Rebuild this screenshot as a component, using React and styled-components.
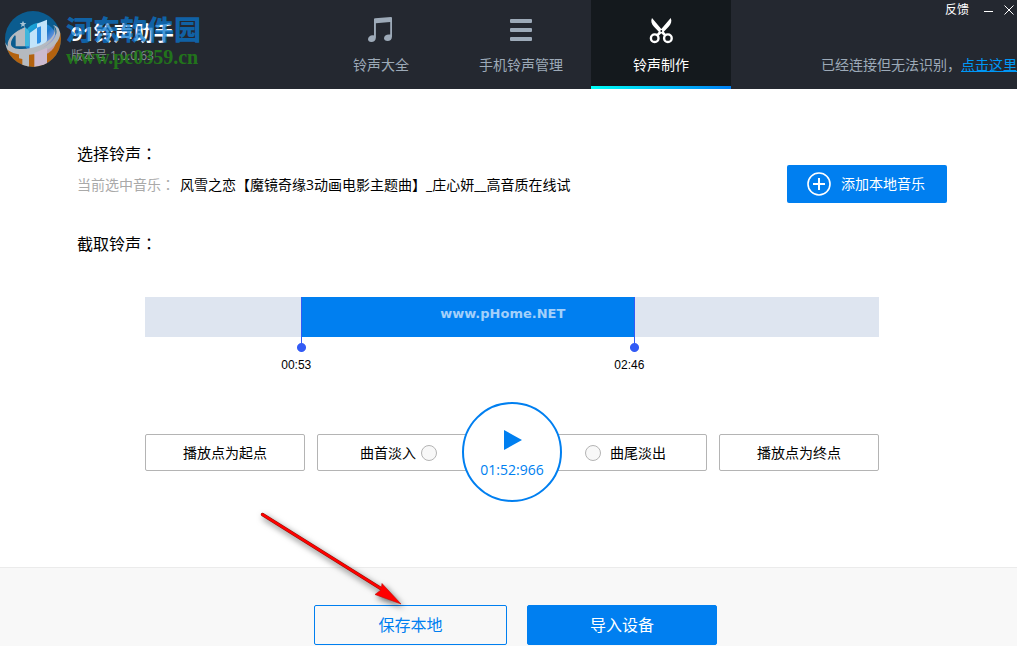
import React, { useState } from 'react';
import styled, { createGlobalStyle, css } from 'styled-components';

const BLUE = '#007ff0';
const DURATION = 249;

const GlobalStyle = createGlobalStyle`
  *, *::before, *::after { box-sizing: border-box; }
  body {
    margin: 0;
    background: #fff;
    color: #000;
    font-family: 'Open Sans', 'Noto Sans CJK SC', sans-serif;
    font-size: 14px;
    line-height: 20px;
  }
  button { font: inherit; cursor: pointer; }
  h1, h2, p { margin: 0; font-weight: 400; }
`;

const Page = styled.div`
  display: flex;
  flex-direction: column;
  min-height: 100vh;
  overflow: hidden;
`;

/* Full-width colon centred in its cell */
const Colon = styled.span`
  font-family: 'Noto Sans CJK TC', sans-serif;
  line-height: 1;
`;

/* Header */

const Header = styled.header`
  display: grid;
  grid-template-columns: minmax(205px, 311fr) auto minmax(200px, 286fr);
  height: 89px;
  background: #242830;
  color: #9daab8;
`;

const Brand = styled.div`
  position: relative;
  display: flex;
  align-items: flex-start;
  gap: 10px;
  padding: 11px 0 0 5px;
`;

const BrandText = styled.div`
  padding-top: 11px;
`;

const AppName = styled.h1`
  color: #fff;
  font-size: 20px;
  font-weight: 700;
  line-height: 24px;
`;

const Version = styled.p`
  color: #8b8f96;
  font-size: 12px;
  line-height: 20px;
`;

const SiteMark = styled.div`
  position: absolute;
  left: 66px;
  top: 14px;
  white-space: nowrap;
  font-weight: 900;
`;

const SiteName = styled.div`
  color: rgba(10, 118, 205, 0.75);
  font-size: 27px;
  line-height: 32px;
`;

const SiteUrl = styled.div`
  color: rgba(34, 136, 22, 0.8);
  font-family: 'Liberation Serif', serif;
  font-size: 20px;
  font-weight: 700;
  line-height: 22px;
`;

const Nav = styled.nav`
  display: flex;
`;

const Tab = styled.button`
  display: flex;
  flex-direction: column;
  align-items: center;
  gap: 11px;
  width: 140px;
  padding: 16px 0 0;
  border: 0;
  border-bottom: 3px solid transparent;
  background: none;
  color: inherit;
  ${({ $active }) =>
    $active &&
    css`
      background: linear-gradient(90deg, #00fff6, #0080f5) bottom / 100% 3px no-repeat border-box, #14191d;
      background-origin: border-box;
      color: #fff;
    `}
`;

const Status = styled.div`
  display: flex;
  flex-direction: column;
  align-items: flex-end;
  justify-content: space-between;
  padding-bottom: 14px;
  white-space: nowrap;
`;

const WindowBar = styled.div`
  display: flex;
  align-items: center;
  padding-right: 3px;
  color: #fff;
`;

const BarButton = styled.button`
  display: flex;
  padding: 0;
  margin-left: ${({ $gap }) => $gap || 0}px;
  border: 0;
  background: none;
  color: inherit;
  font-size: 12px;
  line-height: 20px;
`;

const StatusLink = styled.a`
  color: #0097f5;
`;

/* Content */

const Main = styled.main`
  flex: 1;
  padding: 53px 70px 96px 77px;
`;

const Source = styled.section`
  display: flex;
  align-items: flex-end;
  justify-content: space-between;
  margin-bottom: 29px;
`;

const Heading = styled.h2`
  font-size: 16px;
  line-height: 24px;
`;

const Current = styled.p`
  padding: 9px 0 8px;
`;

const Muted = styled.span`
  margin-right: 5px;
  color: #a9a9a9;
`;

const AddButton = styled.button`
  display: flex;
  align-items: center;
  gap: 10px;
  height: 38px;
  padding: 0 22px 0 20px;
  border: 0;
  border-radius: 2px;
  background: ${BLUE};
  color: #fff;
`;

const Editor = styled.div`
  max-width: 734px;
  margin: 41px auto 0;
`;

const Track = styled.div`
  position: relative;
  display: grid;
  height: 40px;
  background: #dee5f0;
`;

const Selection = styled.div`
  grid-column: 2;
  background: ${BLUE};
  color: #a3d0fa;
  font-family: 'DejaVu Sans', sans-serif;
  font-size: 13px;
  font-weight: 700;
  line-height: 34px;
  text-align: center;
  padding-left: 70px;
`;

const thumb = css`
  width: 9px;
  height: 55px;
  border: 0;
  border-radius: 0;
  background:
    radial-gradient(circle at 50% 50%, #335bf5 4px, transparent 5px) bottom / 9px 9px no-repeat,
    linear-gradient(#335bf5, #335bf5) top / 1px 50px no-repeat;
  pointer-events: auto;
  cursor: ew-resize;
`;

const Handle = styled.input`
  position: absolute;
  top: 0;
  left: -4px;
  width: calc(100% + 9px);
  height: 55px;
  margin: 0;
  appearance: none;
  background: none;
  pointer-events: none;
  &::-webkit-slider-runnable-track { height: 55px; background: none; }
  &::-webkit-slider-thumb { appearance: none; ${thumb} }
  &::-moz-range-thumb { ${thumb} }
`;

const Times = styled.div`
  display: grid;
  margin-bottom: 60px;
  padding-top: 19px;
`;

const Time = styled.output`
  grid-column: ${({ $column }) => $column};
  margin-left: -20px;
  font-family: 'Liberation Sans', sans-serif;
  font-size: 12px;
  line-height: 18px;
`;

const Controls = styled.div`
  position: relative;
  display: flex;
  gap: 12px;
`;

const PointButton = styled.button`
  width: 160px;
  height: 37px;
  padding: 0;
  border: 1px solid #b4b4b4;
  border-radius: 2px;
  background: #fff;
  color: #000;
`;

const FadeGroup = styled.div`
  flex: 1;
  display: flex;
  align-items: center;
  justify-content: space-between;
  height: 37px;
  padding: 0 40px 0 42px;
  border: 1px solid #b4b4b4;
  border-radius: 2px;
`;

const FadeLabel = styled.label`
  display: flex;
  align-items: center;
  gap: ${({ $gap }) => $gap}px;
`;

const FadeCheck = styled.input`
  width: 16px;
  height: 16px;
  margin: 0;
  appearance: none;
  border: 1px solid #b4b4b4;
  border-radius: 50%;
  background: #f8f8f8;
  &:checked { background: ${BLUE}; }
`;

const PlayButton = styled.button`
  position: absolute;
  left: calc(50% - 50px);
  top: -32px;
  display: flex;
  flex-direction: column;
  align-items: center;
  gap: 10px;
  width: 100px;
  height: 100px;
  padding: 26px 0 0;
  border: 2px solid ${BLUE};
  border-radius: 50%;
  background: #fff;
  color: ${BLUE};
`;

/* Footer */

const Footer = styled.footer`
  display: flex;
  justify-content: center;
  gap: 20px;
  padding: 37px 0 1px 14px;
  border-top: 1px solid #ebebeb;
  background: #f8f8f8;
`;

const SaveSlot = styled.div`
  position: relative;
`;

const ActionButton = styled.button`
  width: ${({ $primary }) => ($primary ? 190 : 193)}px;
  height: 40px;
  padding: 0;
  border: 1px solid ${BLUE};
  border-radius: 2px;
  background: ${({ $primary }) => ($primary ? BLUE : 'transparent')};
  color: ${({ $primary }) => ($primary ? '#fff' : BLUE)};
  font-size: 16px;
`;

const Pointer = styled.svg`
  position: absolute;
  left: -60px;
  top: -98px;
  pointer-events: none;
  overflow: visible;
  filter: drop-shadow(2px 3px 3px rgba(0, 0, 0, 0.6));
`;

function Logo() {
  return (
    <svg width="56" height="56" viewBox="0 0 168 168" aria-hidden="true">
      <defs>
        <clipPath id="disc"><circle cx="84" cy="84" r="84" /></clipPath>
        <linearGradient id="glow" x1="0" y1="0" x2="1" y2="1">
          <stop offset="0" stopColor="#20d4f0" />
          <stop offset="0.5" stopColor="#1e7fdc" />
          <stop offset="0.75" stopColor="#b9b4fa" />
          <stop offset="1" stopColor="#e09a6c" />
        </linearGradient>
      </defs>
      <g clipPath="url(#disc)">
        <path d="M0 0H168V168H0Z" fill="#0b5c8f" />
        <path d="M0 112C50 142 118 124 168 62V168H0Z" fill="#b3620f" />
        <circle cx="105" cy="84" r="49" fill="url(#glow)" opacity="0.8" />
        <path d="M28 68L60 48V106H32V76Z" fill="#b5bac0" />
        <path d="M60 48L72 60V106H60Z" fill="#3fb6dc" />
        <path d="M74 66L96 50V38L126 26V88Q122 110 96 114H74Z" fill="#c2e4fa" />
        <path d="M96 50L108 46V92Q106 98 96 98Z" fill="#2d8fe4" />
        <path d="M62 48C30 60 6 82 8 104C14 130 64 134 104 116C140 98 162 68 146 46C156 68 138 88 108 102C66 120 16 118 18 98C18 82 36 62 62 48Z" fill="#b5bac0" />
        <path d="M0 94C14 130 98 134 142 90C156 74 160 54 144 42C170 48 172 76 152 98C108 140 24 142 0 108Z" fill="#b5bac0" />
        <path d="M42 126H72V168H52V144L42 142Z" fill="#b5bac0" />
        <path d="M88 126L126 110V160L88 168Z" fill="#cbbad0" />
        <path d="M54 29L57 36H64L58 41L60 48L54 44L48 48L50 41L44 36H51Z" fill="#a8c4d4" />
      </g>
    </svg>
  );
}

function MusicIcon() {
  return (
    <svg width="28" height="28" viewBox="0 0 28 28" fill="currentColor" aria-hidden="true">
      <path d="M7 3.2Q7 2.3 8 2.2L24 1Q25 1 25 2V20.5C25 23.5 23 25 20.6 25C18.3 25 17 23.8 17 22.2C17 19.6 20 18 23.2 18.6V6L8.9 7.2V21.4C8.9 24.4 6.7 26 4.4 26C2.2 26 1 24.8 1 23.2C1 20.5 4 18.6 7 19.4Z" />
    </svg>
  );
}

function ListIcon() {
  return (
    <svg width="28" height="28" viewBox="0 0 28 28" fill="currentColor" aria-hidden="true">
      <rect x="3" y="3" width="22" height="4" rx="1" />
      <rect x="3" y="12" width="22" height="4" rx="1" />
      <rect x="3" y="21" width="22" height="4" rx="1" />
    </svg>
  );
}

function ScissorsIcon() {
  return (
    <svg width="28" height="28" viewBox="0 0 28 28" aria-hidden="true">
      <path d="M5 2C3.4 5 4.6 8 7 10.8L11.8 15.8L9.2 18.8L11 20.6L14.3 17.2L17.6 20.6L19.4 18.8L16.8 15.8L21.6 10.8C24 8 25.2 5 23.7 2L14.3 13Z" fill="currentColor" />
      <circle cx="14.3" cy="15" r="0.9" fill="#14191d" />
      <circle cx="7.7" cy="22.2" r="3.8" fill="none" stroke="currentColor" strokeWidth="2.4" />
      <circle cx="20.9" cy="22.2" r="3.8" fill="none" stroke="currentColor" strokeWidth="2.4" />
    </svg>
  );
}

const TABS = [
  { label: '铃声大全', Icon: MusicIcon },
  { label: '手机铃声管理', Icon: ListIcon },
  { label: '铃声制作', Icon: ScissorsIcon },
];

const pad = (n) => String(n).padStart(2, '0');
const clock = (s) => `${pad(Math.floor(s / 60))}:${pad(s % 60)}`;

export default function App() {
  const [tab, setTab] = useState(2);
  const [start, setStart] = useState(53);
  const [end, setEnd] = useState(166);
  const columns = { gridTemplateColumns: `${start}fr ${end - start}fr ${DURATION - end}fr` };

  return (
    <Page>
      <GlobalStyle />
      <Header>
        <Brand>
          <Logo />
          <BrandText>
            <AppName>91铃声助手</AppName>
            <Version>版本号 1.0.0.63</Version>
          </BrandText>
          <SiteMark>
            <SiteName>河东软件园</SiteName>
            <SiteUrl>www.pc0359.cn</SiteUrl>
          </SiteMark>
        </Brand>
        <Nav>
          {TABS.map(({ label, Icon }, i) => (
            <Tab key={label} type="button" $active={i === tab} onClick={() => setTab(i)}>
              <Icon />
              {label}
            </Tab>
          ))}
        </Nav>
        <Status>
          <WindowBar>
            <BarButton type="button">反馈</BarButton>
            <BarButton type="button" $gap={15} aria-label="最小化">
              <svg width="10" height="10" aria-hidden="true"><path d="M0 6.5H9" stroke="currentColor" /></svg>
            </BarButton>
            <BarButton type="button" $gap={10} aria-label="关闭">
              <svg width="10" height="10" aria-hidden="true"><path d="M0.5 0.5L9.5 9.5M9.5 0.5L0.5 9.5" stroke="currentColor" /></svg>
            </BarButton>
          </WindowBar>
          <p>已经连接但无法识别，<StatusLink href="#help">点击这里</StatusLink></p>
        </Status>
      </Header>

      <Main>
        <Source>
          <div>
            <Heading>选择铃声<Colon>：</Colon></Heading>
            <Current><Muted>当前选中音乐<Colon>：</Colon></Muted>风雪之恋【魔镜奇缘3动画电影主题曲】_庄心妍__高音质在线试</Current>
          </div>
          <AddButton type="button">
            <svg width="24" height="24" viewBox="0 0 24 24" fill="none" stroke="currentColor" aria-hidden="true">
              <circle cx="12" cy="12" r="11" strokeWidth="1.6" />
              <path d="M12 6V18M6 12H18" strokeWidth="2" />
            </svg>
            添加本地音乐
          </AddButton>
        </Source>

        <Heading>截取铃声<Colon>：</Colon></Heading>
        <Editor>
          <Track style={columns}>
            <Selection>www.pHome.NET</Selection>
            <Handle type="range" aria-label="起点" min="0" max={DURATION} value={start}
              onChange={(e) => setStart(Math.min(+e.target.value, end - 1))} />
            <Handle type="range" aria-label="终点" min="0" max={DURATION} value={end}
              onChange={(e) => setEnd(Math.max(+e.target.value, start + 1))} />
          </Track>
          <Times style={columns}>
            <Time $column={2}>{clock(start)}</Time>
            <Time $column={3}>{clock(end)}</Time>
          </Times>
          <Controls>
            <PointButton type="button">播放点为起点</PointButton>
            <FadeGroup>
              <FadeLabel $gap={5}>曲首淡入<FadeCheck type="checkbox" /></FadeLabel>
              <FadeLabel $gap={9}><FadeCheck type="checkbox" />曲尾淡出</FadeLabel>
            </FadeGroup>
            <PointButton type="button">播放点为终点</PointButton>
            <PlayButton type="button">
              <svg width="20" height="20" viewBox="0 0 20 20" aria-hidden="true"><path d="M2 0L20 10L2 20Z" fill="currentColor" /></svg>
              01:52:966
            </PlayButton>
          </Controls>
        </Editor>
      </Main>

      <Footer>
        <SaveSlot>
          <ActionButton type="button">保存本地</ActionButton>
          <Pointer width="160" height="110" viewBox="0 0 160 110" aria-hidden="true">
            <path d="M8.5 7.5L130 83.5" stroke="#8e1408" strokeWidth="3.4" strokeLinecap="round" />
            <path d="M147 97L121 87.5L127 83L128 76.5Z" fill="#f00" stroke="#c00a04" strokeWidth="0.6" />
            <path d="M8.5 7.5L130 83.5" stroke="#f00" strokeWidth="2.6" strokeLinecap="round" />
          </Pointer>
        </SaveSlot>
        <ActionButton type="button" $primary>导入设备</ActionButton>
      </Footer>
    </Page>
  );
}
